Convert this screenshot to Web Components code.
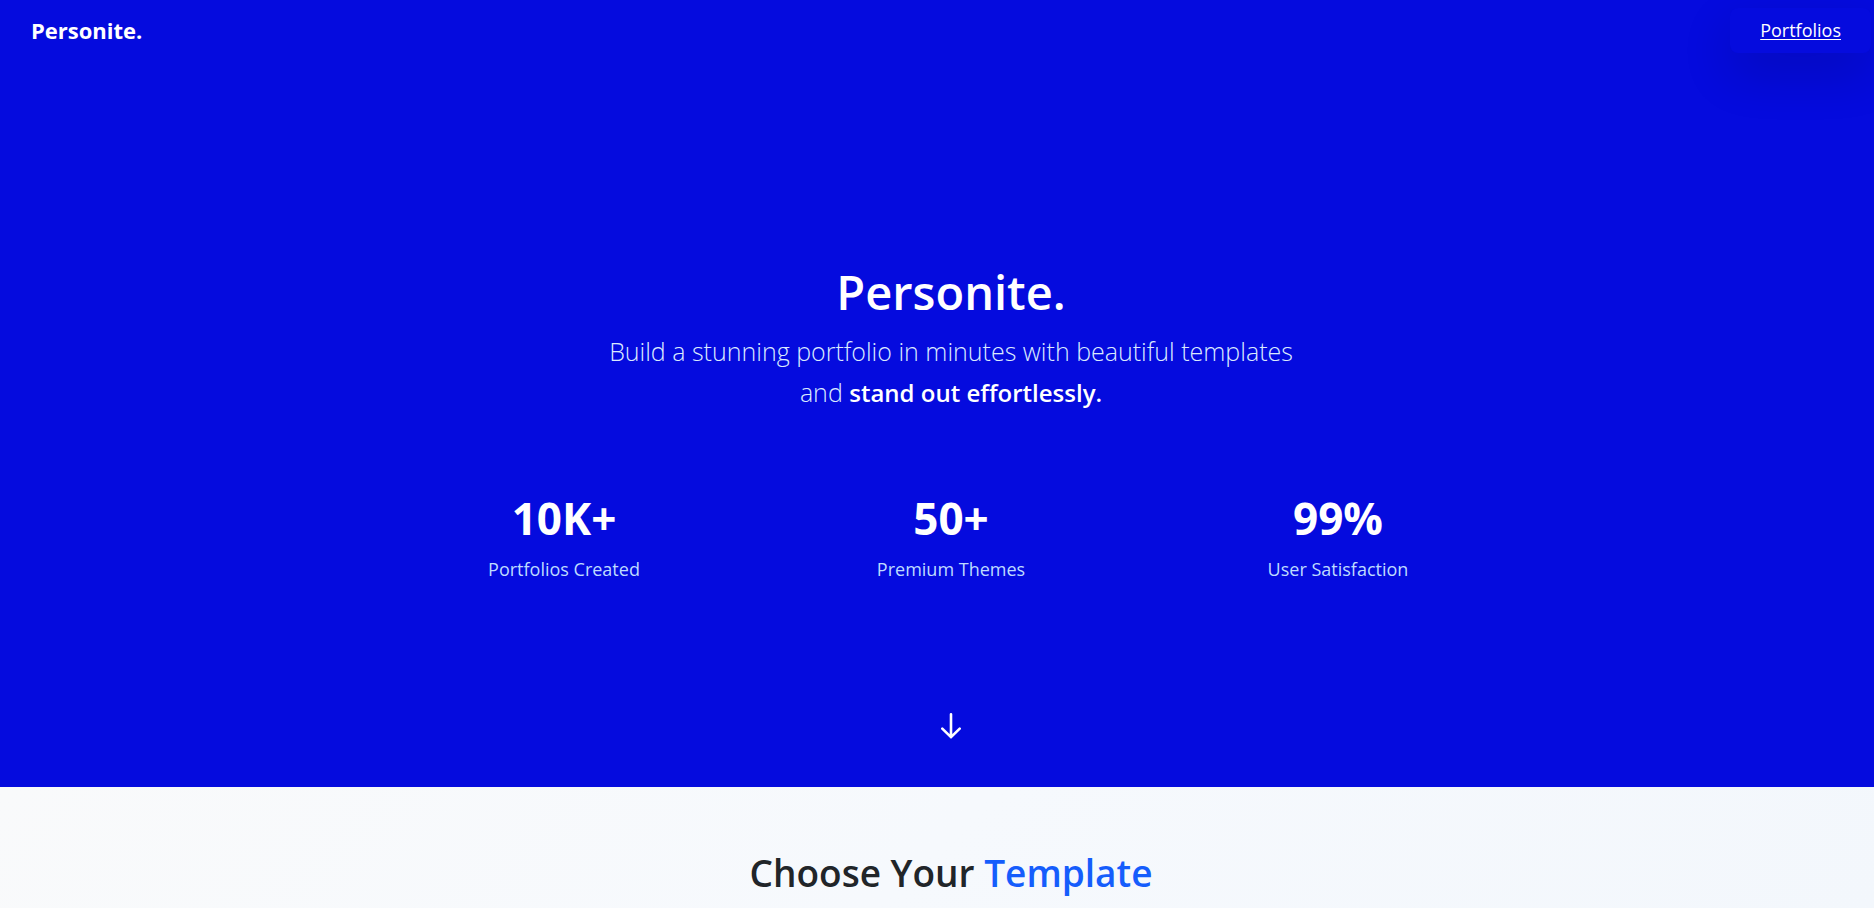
<!DOCTYPE html>
<html lang="en">
<head>
<meta charset="utf-8">
<meta name="viewport" content="width=device-width, initial-scale=1">
<title>Personite.</title>
<style>
  body { margin: 0; font-family: "Open Sans", "Noto Sans", sans-serif; background: #f4f7fd; }
</style>
</head>
<body>
<personite-app></personite-app>
<script>
const define = (name, html) => customElements.define(name, class extends HTMLElement {
  constructor() {
    super();
    const t = document.createElement('template');
    t.innerHTML = html;
    this.attachShadow({ mode: 'open' }).append(t.content.cloneNode(true));
  }
});

define('nav-bar', `
<style>
  :host { display: block; }
  header { display: flex; justify-content: space-between; align-items: center; height: 60px; padding: 0 3px 0 31px; }
  .logo { font-size: 22px; font-weight: 700; line-height: 32px; color: #fff; text-decoration: none; }
  .link { display: block; padding: 10px 30px; border-radius: 8px; font-size: 18px; font-weight: 500; line-height: 25px; color: #fff;
    background: var(--brand); box-shadow: 0 20px 50px rgba(0, 0, 0, .15); text-underline-offset: 2px; }
</style>
<header><a class="logo" href="#">Personite.</a><nav><a class="link" href="#portfolios"><slot></slot></a></nav></header>`);

define('stat-item', `
<style>
  :host { display: flex; flex-direction: column; align-items: center; gap: 11px; }
  .value { font-size: 44px; font-weight: 700; line-height: 52px; color: #fff; }
  .label { font-size: 18px; font-weight: 400; line-height: 28px; color: #bedbff; }
</style>
<div class="value"><slot name="value"></slot></div>
<div class="label"><slot></slot></div>`);

define('hero-section', `
<style>
  :host { display: flex; flex-direction: column; background: var(--brand); overflow: hidden; }
  .body { display: flex; flex-direction: column; align-items: center; padding: 202px 0 48px 28px; text-align: center; }
  h1 { margin: 0 0 9px; font-size: 47px; font-weight: 600; line-height: 60px; color: #fff; }
  p { margin: 0 0 79px; max-width: 720px; font-size: 25px; font-weight: 300; line-height: 41px; color: #dbeafe; }
  strong { font-size: 24px; font-weight: 600; color: #fff; }
  .stats { display: grid; grid-template-columns: repeat(3, 1fr); width: 100%; max-width: 1161px; margin-bottom: 130px; }
  .down { display: block; line-height: 0; }
</style>
<nav-bar>Portfolios</nav-bar>
<div class="body">
  <h1>Personite.</h1>
  <p><span>Build a stunning portfolio in minutes with beautiful templates</span> <span>and</span> <strong>stand out effortlessly.</strong></p>
  <div class="stats">
    <stat-item><span slot="value">10K+</span>Portfolios Created</stat-item>
    <stat-item><span slot="value">50+</span>Premium Themes</stat-item>
    <stat-item><span slot="value">99%</span>User Satisfaction</stat-item>
  </div>
  <a class="down" href="#portfolios" aria-label="Scroll down">
    <svg width="20" height="26" viewBox="0 0 20 26" fill="none" stroke="#fff" stroke-width="2.6" stroke-linecap="round" stroke-linejoin="round"><path d="M10 1.3V24.2M1.3 15.6L10 24.2L18.7 15.6"/></svg>
  </a>
</div>`);

define('template-section', `
<style>
  :host { display: block; padding: 61px 0 10px 28px; text-align: center; background: linear-gradient(135deg, #f9fafb, #f6f9fd 50%, #f3f7fc); }
  h2 { margin: 0; font-size: 37px; font-weight: 600; line-height: 50px; color: #212529; }
  span { color: #155dfc; }
</style>
<h2>Choose Your <span>Template</span></h2>`);

define('personite-app', `
<style>:host { display: block; --brand: #050bde; }</style>
<main><hero-section></hero-section><template-section id="portfolios"></template-section></main>`);
</script>
</body>
</html>
